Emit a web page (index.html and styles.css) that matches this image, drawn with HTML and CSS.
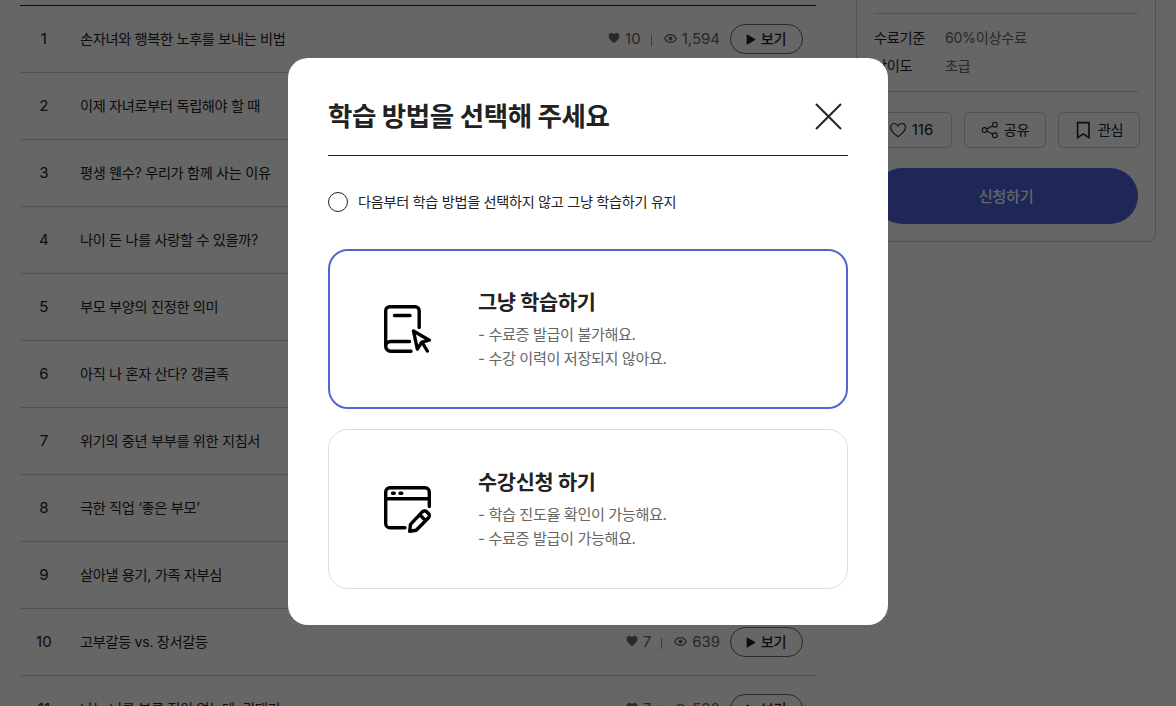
FILE: index.html
```html
<!DOCTYPE html>
<html lang="ko">
  <head>
    <meta charset="UTF-8" />
    <meta name="viewport" content="width=device-width, initial-scale=1.0" />
    <title>학습 방법 선택</title>
    <link rel="stylesheet" href="styles.css">
  </head>
  <body>
    <svg class="sprite" aria-hidden="true">
      <symbol id="heart-fill" viewBox="0 0 12 12">
        <path d="M6 11.3C3.6 9.4.6 7 .6 4.1.6 2.2 1.9 1 3.4 1 4.5 1 5.4 1.5 6 2.4 6.600 1.500 7.500 1 8.600 1c1.500 0 2.800 1.200 2.800 3.100 0 2.900-3 5.300-5.400 7.200z" fill="currentColor" />
      </symbol>
      <symbol id="eye" viewBox="0 0 12 10">
        <path d="M.7 5C1.800 2.700 3.700 1.400 6 1.400S10.200 2.700 11.300 5C10.200 7.300 8.300 8.600 6 8.600S1.800 7.300.7 5z" fill="none" stroke="currentColor" stroke-width="1.300" />
        <circle cx="6" cy="5" r="1.900" fill="currentColor" />
      </symbol>
      <symbol id="play" viewBox="0 0 9 10">
        <path d="M1 1l7 4-7 4z" fill="currentColor" stroke="currentColor" stroke-linejoin="round" />
      </symbol>
    </svg>

    <div class="page">
      <ul class="lessons">
        <li class="lesson">
          <span class="lesson__num">1</span>
          <span class="lesson__title">손자녀와 행복한 노후를 보내는 비법</span>
          <span class="stat"><svg class="stat__heart"><use href="#heart-fill" /></svg>10</span>
          <span class="stat__line"></span>
          <span class="stat"><svg class="stat__eye"><use href="#eye" /></svg>1,594</span>
          <button class="view"><svg class="view__icon"><use href="#play" /></svg>보기</button>
        </li>
        <li class="lesson">
          <span class="lesson__num">2</span>
          <span class="lesson__title">이제 자녀로부터 독립해야 할 때</span>
        </li>
        <li class="lesson">
          <span class="lesson__num">3</span>
          <span class="lesson__title">평생 웬수? 우리가 함께 사는 이유</span>
        </li>
        <li class="lesson">
          <span class="lesson__num">4</span>
          <span class="lesson__title">나이 든 나를 사랑할 수 있을까?</span>
        </li>
        <li class="lesson">
          <span class="lesson__num">5</span>
          <span class="lesson__title">부모 부양의 진정한 의미</span>
        </li>
        <li class="lesson">
          <span class="lesson__num">6</span>
          <span class="lesson__title">아직 나 혼자 산다? 갱글족</span>
        </li>
        <li class="lesson">
          <span class="lesson__num">7</span>
          <span class="lesson__title">위기의 중년 부부를 위한 지침서</span>
        </li>
        <li class="lesson">
          <span class="lesson__num">8</span>
          <span class="lesson__title">극한 직업 ‘좋은 부모’</span>
        </li>
        <li class="lesson">
          <span class="lesson__num">9</span>
          <span class="lesson__title">살아낼 용기, 가족 자부심</span>
        </li>
        <li class="lesson">
          <span class="lesson__num">10</span>
          <span class="lesson__title">고부갈등 vs. 장서갈등</span>
          <span class="stat"><svg class="stat__heart"><use href="#heart-fill" /></svg>7</span>
          <span class="stat__line"></span>
          <span class="stat"><svg class="stat__eye"><use href="#eye" /></svg>639</span>
          <button class="view"><svg class="view__icon"><use href="#play" /></svg>보기</button>
        </li>
        <li class="lesson">
          <span class="lesson__num">11</span>
          <span class="lesson__title">나는 너를 부른 적이 없는데, 권태기</span>
          <span class="stat"><svg class="stat__heart"><use href="#heart-fill" /></svg>7</span>
          <span class="stat__line"></span>
          <span class="stat"><svg class="stat__eye"><use href="#eye" /></svg>580</span>
          <button class="view"><svg class="view__icon"><use href="#play" /></svg>보기</button>
        </li>
      </ul>

      <aside class="side">
        <dl class="info">
          <div class="info__row"><dt>수료기준</dt><dd>60%이상수료</dd></div>
          <div class="info__row"><dt>난이도</dt><dd>초급</dd></div>
        </dl>
        <div class="actions">
          <button class="action">
            <svg width="18" height="18" viewBox="0 0 18 18" fill="none" stroke="currentColor" stroke-width="1.100">
              <path d="M9 15.700C5.500 13 1.600 10.200 1.600 6.400c0-2.300 1.700-3.900 3.700-3.900C6.900 2.500 8.200 3.300 9 4.800c.8-1.500 2.100-2.300 3.700-2.300 2 0 3.700 1.600 3.700 3.900 0 3.800-3.900 6.600-7.400 9.300z" />
            </svg><span class="action__count">116</span>
          </button>
          <button class="action">
            <svg width="18" height="18" viewBox="0 0 18 18" fill="none" stroke="currentColor" stroke-width="1.100">
              <circle cx="3.600" cy="9" r="2.400" />
              <circle cx="13.900" cy="3.700" r="2.400" />
              <circle cx="13.900" cy="14.300" r="2.400" />
              <path d="M5.800 7.900l5.900-3.100M5.800 10.100l5.900 3.100" />
            </svg><span class="action__text">공유</span>
          </button>
          <button class="action">
            <svg width="18" height="18" viewBox="0 0 18 18" fill="none" stroke="currentColor" stroke-width="1.600">
              <path d="M2.600 1.600h11.400v15L8.300 12.900 2.600 16.600z" />
            </svg><span class="action__text">관심</span>
          </button>
        </div>
        <button class="apply">신청하기</button>
      </aside>
    </div>

    <div class="dim">
      <div class="modal">
        <div class="modal__head">
          <h1 class="modal__title">학습 방법을 선택해 주세요</h1>
          <button class="close" aria-label="닫기">
            <svg width="40" height="40" viewBox="0 0 40 40" fill="none" stroke="#222" stroke-width="2">
              <path d="M8 8l25 25M33 8L8 33" />
            </svg>
          </button>
        </div>
        <label class="keep">
          <input class="keep__input" type="radio" />
          <span class="keep__text">다음부터 학습 방법을 선택하지 않고 그냥 학습하기 유지</span>
        </label>
        <div class="card card--active">
          <svg class="card__icon" viewBox="0 0 48 48" fill="none" stroke="#000" stroke-width="3.400" stroke-linecap="round" stroke-linejoin="round">
            <path d="M35.200 22.500V5.700a4 4 0 0 0-4-4H5.700a4 4 0 0 0-4 4v35.500a5 5 0 0 0 5 5H27M25.500 36.500H6.700a5 5 0 0 0-5 5M10.500 10.500h15.500" />
            <path d="M29.500 26l15.800 9.200-7.500 2-4.500 6.800zM38.300 37.500l5 8.500" />
          </svg>
          <div class="card__body">
            <h2 class="card__title">그냥 학습하기</h2>
            <p class="card__text">- 수료증 발급이 불가해요.</p>
            <p class="card__text">- 수강 이력이 저장되지 않아요.</p>
          </div>
        </div>
        <div class="card">
          <svg class="card__icon" viewBox="0 0 48 48" fill="none" stroke="#000" stroke-width="3.400" stroke-linecap="round" stroke-linejoin="round">
            <path d="M45.300 21.500V7a4.300 4.300 0 0 0-4.300-4.300H6A4.300 4.300 0 0 0 1.700 7v31.500A4.300 4.300 0 0 0 6 42.800h15M1.700 13.700h43.600M8.500 8.200h1.800M16 8.200h1.800" />
            <path d="M25.700 46.300l.8-7L38.500 26.700a3 3 0 0 1 4.200 0l1.800 1.800a3 3 0 0 1 0 4.200L32.200 45.300zM36 30l5.500 5.500" />
          </svg>
          <div class="card__body">
            <h2 class="card__title">수강신청 하기</h2>
            <p class="card__text">- 학습 진도율 확인이 가능해요.</p>
            <p class="card__text">- 수료증 발급이 가능해요.</p>
          </div>
        </div>
      </div>
    </div>
  </body>
</html>
```
FILE: styles.css
```css
* {
  box-sizing: border-box;
  margin: 0;
  padding: 0;
}
body {
  height: 706px;
  overflow: hidden;
  background-color: #fff;
  color: #222;
  font-family: Inter, "Noto Sans CJK KR", sans-serif;
  font-size: 14.2px;
  letter-spacing: -0.023em;
}
button {
  background: none;
  border: none;
  color: inherit;
  font: inherit;
  letter-spacing: inherit;
}
.sprite {
  display: none;
}
.page {
  display: flex;
  align-items: flex-start;
  height: 706px;
  padding-left: 20px;
  overflow: hidden;
}

/* lesson list */
.lessons {
  width: 796px;
  margin-top: 5px;
  border-top: 1px solid #222;
  list-style: none;
}
.lesson {
  display: flex;
  align-items: center;
  height: 67px;
  padding: 0 13px 2px 0;
  border-bottom: 1px solid #d0d0d0;
}
.lesson__num {
  width: 48px;
  margin-right: 12px;
  font-size: 15px;
  text-align: center;
  letter-spacing: 0.01em;
}
.lesson__title {
  flex: 1;
  padding-bottom: 1px;
}
.stat {
  display: flex;
  align-items: center;
  gap: 5px;
  color: #666;
  font-size: 15px;
  letter-spacing: 0;
}
.stat__heart {
  width: 12px;
  height: 12px;
}
.stat__eye {
  width: 13px;
  height: 11px;
}
.stat__line {
  width: 1px;
  height: 11px;
  margin: 4px 12px 0 10px;
  background-color: #999;
}
.view {
  display: flex;
  align-items: center;
  justify-content: center;
  gap: 5px;
  width: 73px;
  height: 30px;
  margin: 2px 0 0 10px;
  padding: 0 1px 2px 0;
  border: 1px solid #666;
  border-radius: 15px;
  font-weight: 500;
}
.view__icon {
  width: 10px;
  height: 11px;
  margin-top: 2px;
}

/* course panel */
.side {
  width: 300px;
  height: 242px;
  margin-left: 40px;
  padding: 13px 17px 0;
  border: 1px solid #ccc;
  border-top: none;
  border-radius: 0 0 8px 8px;
}
.info {
  height: 79px;
  padding-top: 10px;
  border-top: 1px solid #ccc;
  border-bottom: 1px solid #ccc;
}
.info__row {
  display: flex;
  height: 28px;
  line-height: 27px;
}
.info__row dt {
  width: 71px;
}
.info__row dd {
  color: #666;
}
.actions {
  display: flex;
  gap: 12px;
  margin: 20px -2px 20px -4px;
}
.action {
  display: flex;
  align-items: center;
  justify-content: center;
  gap: 5px;
  width: 82px;
  height: 36px;
  border: 1px solid #ccc;
  border-radius: 5px;
}
.action__count {
  padding-bottom: 1px;
  font-size: 15px;
  letter-spacing: 0;
}
.action__text {
  padding-bottom: 2px;
}
.apply {
  width: 100%;
  height: 56px;
  padding-bottom: 3px;
  border-radius: 28px;
  background-color: #4c62dc;
  color: #fff;
  font-size: 15.2px;
  font-weight: 500;
}

/* popup */
.dim {
  position: fixed;
  inset: 0;
  display: flex;
  justify-content: center;
  align-items: flex-start;
  padding-top: 58px;
  background-color: rgba(0, 0, 0, 0.6);
}
.modal {
  width: 600px;
  height: 567px;
  padding: 38px 40px 0;
  border-radius: 20px;
  background-color: #fff;
}
.modal__head {
  display: flex;
  align-items: flex-start;
  justify-content: space-between;
  height: 60px;
  border-bottom: 1px solid #222;
}
.modal__title {
  font-size: 26.5px;
  font-weight: 700;
  line-height: 40px;
  letter-spacing: -0.015em;
}
.close {
  width: 40px;
  height: 40px;
}
.keep {
  display: flex;
  align-items: center;
  gap: 10px;
  height: 20px;
  margin: 36px 0 37px;
}
.keep__input {
  appearance: none;
  width: 20px;
  height: 20px;
  border: 1px solid #222;
  border-radius: 50%;
}
.keep__text {
  padding-bottom: 2px;
}
.card {
  display: flex;
  align-items: center;
  gap: 46px;
  height: 160px;
  margin-bottom: 20px;
  padding-left: 55px;
  border: 1px solid #ddd;
  border-radius: 20px;
}
.card--active {
  padding-left: 54px;
  border: 2px solid #5467d0;
}
.card__icon {
  width: 48px;
  height: 48px;
}
.card__body {
  padding-bottom: 1px;
}
.card__title {
  margin-bottom: 4px;
  font-size: 20.8px;
  font-weight: 700;
  line-height: 32px;
  letter-spacing: -0.015em;
}
.card__text {
  color: #666;
  font-size: 15.2px;
  line-height: 24px;
  letter-spacing: -0.028em;
}
```
